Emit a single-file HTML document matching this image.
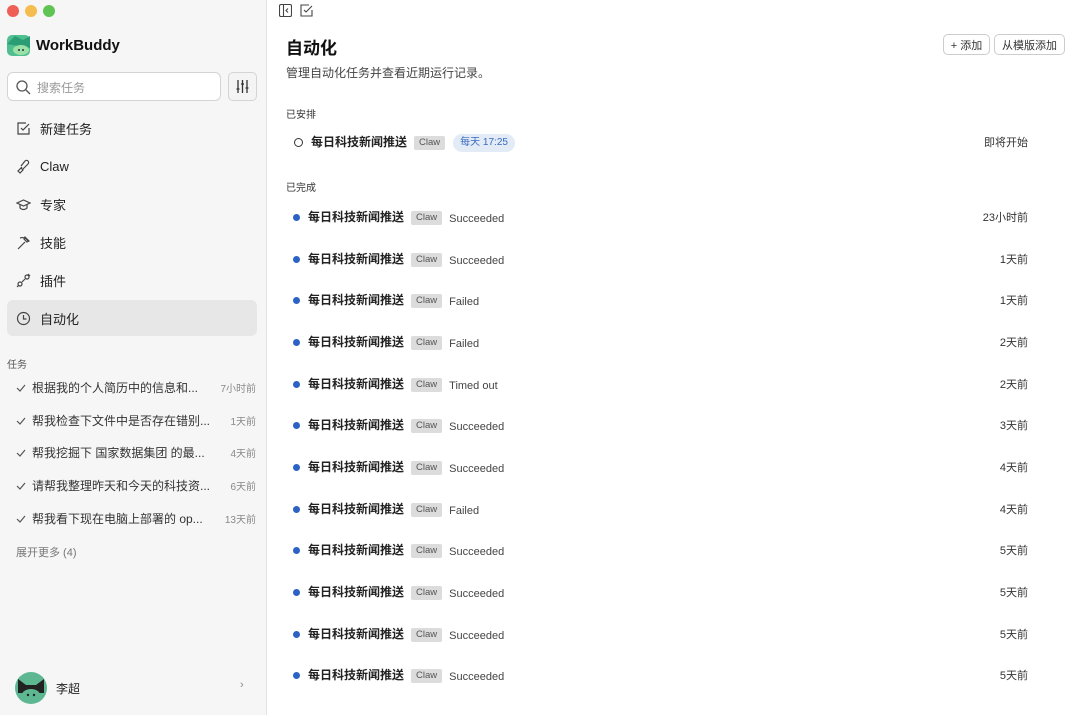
<!DOCTYPE html>
<html><head><meta charset="utf-8"><style>
*{margin:0;padding:0;box-sizing:border-box}
body{width:1080px;height:715px;overflow:hidden;background:#fff;font-family:"Liberation Sans","Noto Sans CJK SC",sans-serif;color:#222;position:relative}
.sb{position:absolute;left:0;top:0;width:267px;height:715px;background:#f6f6f6;border-right:1px solid #e4e4e4}
.abs{position:absolute}
.dot{width:12px;height:12px;border-radius:50%;position:absolute;top:5px}
.nav{position:absolute;left:7px;width:250px;height:36px;display:flex;align-items:center;padding-left:9px;font-size:13px;color:#222}
.nav svg{margin-right:9px}
.task{position:absolute;left:16px;width:240px;height:16px;font-size:12px;color:#333;display:flex;align-items:center}
.task>*{display:block;line-height:16px}
.task svg{margin-right:6px;flex:none}
.task .t{flex:1;white-space:nowrap;overflow:hidden}
.task .d{font-size:10px;color:#888;margin-left:6px;position:relative;top:2px}
.row{position:absolute;left:293px;height:18px;display:flex;align-items:center;font-size:11px}
.row>span{display:block;line-height:16px}
.bd{width:7px!important;height:7px;border-radius:50%;background:#2b62c4;margin-right:8px}
.ti{font-weight:bold;font-size:12px;color:#222}
.tag{background:#dcdcdc;color:#555;font-size:9.5px;padding:0 5px;line-height:14px!important;height:14px;border-radius:2px;margin-left:7px;position:relative;top:1px}
.st{color:#444;margin-left:7px;position:relative;top:2px}
.tm{position:absolute;right:52px;font-size:11px;color:#333;line-height:18px}
.btn{position:absolute;top:34px;height:21px;border:1px solid #ccc;border-radius:5px;font-size:11px;color:#333;display:flex;align-items:center;justify-content:center;background:#fff}
</style></head><body>
<div class="sb">
 <div class="dot" style="left:7px;background:#ee5f57"></div>
 <div class="dot" style="left:25px;background:#f5bd4f"></div>
 <div class="dot" style="left:43px;background:#5fc454"></div>
 <svg class="abs" style="left:7px;top:34px" width="23" height="23" viewBox="0 0 23 23"><rect x="0" y="1" width="23" height="21" rx="5" fill="#4fbf8f"/><path d="M0 10 L8 2 L16 6 L23 2 L23 14 Z" fill="#2a9d75"/><ellipse cx="14" cy="16" rx="8" ry="5" fill="#9be0a6"/><circle cx="12" cy="16" r="1" fill="#234"/><circle cx="16" cy="16" r="1" fill="#234"/></svg>
 <div class="abs" style="left:36px;top:37px;font-size:15px;font-weight:bold;color:#111">WorkBuddy</div>
 <div class="abs" style="left:7px;top:72px;width:214px;height:29px;border:1px solid #d4d4d4;border-radius:6px;background:#fff"></div>
 <svg class="abs" style="left:15px;top:79px" width="16" height="16" viewBox="0 0 16 16" fill="none" stroke="#555" stroke-width="1.3"><circle cx="7" cy="7" r="5"/><path d="M11 11l4 4"/></svg>
 <div class="abs" style="left:37px;top:79px;font-size:12px;color:#999">搜索任务</div>
 <div class="abs" style="left:228px;top:72px;width:29px;height:29px;border:1px solid #d4d4d4;border-radius:5px;background:#f4f4f4"></div>
 <svg class="abs" style="left:235px;top:79px" width="15" height="15" viewBox="0 0 15 15" stroke="#333" stroke-width="1.3" fill="none"><path d="M3 1v13M7.5 1v13M12 1v13M1.5 10h3M6 5h3M10.5 9h3"/></svg>
 <div class="nav" style="top:110px"><svg width="15" height="15" viewBox="0 0 15 15" fill="none" stroke="#444" stroke-width="1.2"><path d="M13 7v6H2V2h8"/><path d="M5 7l2 2 6-6"/></svg>新建任务</div>
 <div class="nav" style="top:148px"><svg width="15" height="15" viewBox="0 0 15 15" fill="none" stroke="#444" stroke-width="1.2"><path d="M2 12l4-4M4 14l-2-2 3-3 2 2zM7 10l5-5a2 2 0 0 0-3-3L5 7"/></svg>Claw</div>
 <div class="nav" style="top:186px"><svg width="15" height="15" viewBox="0 0 15 15" fill="none" stroke="#444" stroke-width="1.2"><path d="M1 6l6.5-3L14 6l-6.5 3z"/><path d="M4 7.5v3.5c2 2 5 2 7 0V7.5"/></svg>专家</div>
 <div class="nav" style="top:224px"><svg width="15" height="15" viewBox="0 0 15 15" fill="none" stroke="#444" stroke-width="1.2"><path d="M2 14l7-7M4 3c3-1 6 0 8 3M9 2l4 4-2 1-3-3z"/></svg>技能</div>
 <div class="nav" style="top:262px"><svg width="15" height="15" viewBox="0 0 15 15" fill="none" stroke="#444" stroke-width="1.2"><circle cx="4" cy="11" r="2"/><circle cx="11" cy="4" r="2"/><path d="M1 14l2-2M12 1l2 2M6 9l3-3"/></svg>插件</div>
 <div class="nav" style="top:300px;background:#e7e7e7;border-radius:6px"><svg width="15" height="15" viewBox="0 0 15 15" fill="none" stroke="#444" stroke-width="1.2"><circle cx="7.5" cy="7.5" r="6"/><path d="M7.5 4v4h3"/></svg>自动化</div>
 <div class="abs" style="left:7px;top:356px;font-size:10px;color:#555">任务</div>
 <div class="task" style="top:380px"><svg width="10" height="10" viewBox="0 0 10 10" fill="none" stroke="#555" stroke-width="1.2"><path d="M1 5l3 3 5-6"/></svg><span class="t">根据我的个人简历中的信息和...</span><span class="d">7小时前</span></div>
 <div class="task" style="top:413px"><svg width="10" height="10" viewBox="0 0 10 10" fill="none" stroke="#555" stroke-width="1.2"><path d="M1 5l3 3 5-6"/></svg><span class="t">帮我检查下文件中是否存在错别...</span><span class="d">1天前</span></div>
 <div class="task" style="top:445px"><svg width="10" height="10" viewBox="0 0 10 10" fill="none" stroke="#555" stroke-width="1.2"><path d="M1 5l3 3 5-6"/></svg><span class="t">帮我挖掘下 国家数据集团 的最...</span><span class="d">4天前</span></div>
 <div class="task" style="top:478px"><svg width="10" height="10" viewBox="0 0 10 10" fill="none" stroke="#555" stroke-width="1.2"><path d="M1 5l3 3 5-6"/></svg><span class="t">请帮我整理昨天和今天的科技资...</span><span class="d">6天前</span></div>
 <div class="task" style="top:511px"><svg width="10" height="10" viewBox="0 0 10 10" fill="none" stroke="#555" stroke-width="1.2"><path d="M1 5l3 3 5-6"/></svg><span class="t">帮我看下现在电脑上部署的 op...</span><span class="d">13天前</span></div>
 <div class="abs" style="left:16px;top:544px;font-size:11px;color:#777">展开更多 (4)</div>
 <svg class="abs" style="left:14px;top:671px" width="34" height="34" viewBox="0 0 34 34"><circle cx="17" cy="17" r="16" fill="#5db891"/><path d="M4 8l8 6h10l8-6v14H4z" fill="#222"/><ellipse cx="17" cy="24" rx="9" ry="6" fill="#5db891"/><circle cx="14" cy="24" r="1.2" fill="#222"/><circle cx="20" cy="24" r="1.2" fill="#222"/></svg>
 <div class="abs" style="left:56px;top:680px;font-size:12px;color:#222">李超</div>
 <div class="abs" style="left:240px;top:679px;font-size:11px;color:#888">›</div>
</div>
<svg class="abs" style="left:279px;top:4px" width="13" height="13" viewBox="0 0 13 13" fill="none" stroke="#444" stroke-width="1.1"><rect x="0.5" y="0.5" width="12" height="12" rx="1.5"/><path d="M4.5 1v11M9 4.5L7 6.5l2 2"/></svg>
<svg class="abs" style="left:300px;top:4px" width="14" height="13" viewBox="0 0 14 13" fill="none" stroke="#444" stroke-width="1.1"><path d="M12 6v6H1V1h8"/><path d="M4 6l2 2 6-6"/></svg>
<div class="abs" style="left:286px;top:34px;font-size:17px;font-weight:bold;color:#111">自动化</div>
<div class="abs" style="left:286px;top:64px;font-size:12px;color:#444">管理自动化任务并查看近期运行记录。</div>
<div class="btn" style="left:943px;width:47px">+ 添加</div>
<div class="btn" style="left:994px;width:71px">从模版添加</div>
<div class="abs" style="left:286px;top:106px;font-size:10px;color:#333">已安排</div>
<div class="row" style="top:133px"><span style="width:9px;height:9px;border:1.5px solid #333;border-radius:50%;margin-right:8px;margin-left:1px"></span><span class="ti">每日科技新闻推送</span><span class="tag">Claw</span><span style="margin-left:8px;background:#e3ebf7;color:#3a6cc0;font-size:10px;padding:1px 7px;border-radius:9px;position:relative;top:1px">每天 17:25</span></div>
<div class="tm" style="top:134px">即将开始</div>
<div class="abs" style="left:286px;top:179px;font-size:10px;color:#333">已完成</div>
<div class="row" style="top:208px"><span class="bd"></span><span class="ti">每日科技新闻推送</span><span class="tag">Claw</span><span class="st">Succeeded</span></div><div class="tm" style="top:209px">23小时前</div>
<div class="row" style="top:250px"><span class="bd"></span><span class="ti">每日科技新闻推送</span><span class="tag">Claw</span><span class="st">Succeeded</span></div><div class="tm" style="top:251px">1天前</div>
<div class="row" style="top:291px"><span class="bd"></span><span class="ti">每日科技新闻推送</span><span class="tag">Claw</span><span class="st">Failed</span></div><div class="tm" style="top:292px">1天前</div>
<div class="row" style="top:333px"><span class="bd"></span><span class="ti">每日科技新闻推送</span><span class="tag">Claw</span><span class="st">Failed</span></div><div class="tm" style="top:334px">2天前</div>
<div class="row" style="top:375px"><span class="bd"></span><span class="ti">每日科技新闻推送</span><span class="tag">Claw</span><span class="st">Timed out</span></div><div class="tm" style="top:376px">2天前</div>
<div class="row" style="top:416px"><span class="bd"></span><span class="ti">每日科技新闻推送</span><span class="tag">Claw</span><span class="st">Succeeded</span></div><div class="tm" style="top:417px">3天前</div>
<div class="row" style="top:458px"><span class="bd"></span><span class="ti">每日科技新闻推送</span><span class="tag">Claw</span><span class="st">Succeeded</span></div><div class="tm" style="top:459px">4天前</div>
<div class="row" style="top:500px"><span class="bd"></span><span class="ti">每日科技新闻推送</span><span class="tag">Claw</span><span class="st">Failed</span></div><div class="tm" style="top:501px">4天前</div>
<div class="row" style="top:541px"><span class="bd"></span><span class="ti">每日科技新闻推送</span><span class="tag">Claw</span><span class="st">Succeeded</span></div><div class="tm" style="top:542px">5天前</div>
<div class="row" style="top:583px"><span class="bd"></span><span class="ti">每日科技新闻推送</span><span class="tag">Claw</span><span class="st">Succeeded</span></div><div class="tm" style="top:584px">5天前</div>
<div class="row" style="top:625px"><span class="bd"></span><span class="ti">每日科技新闻推送</span><span class="tag">Claw</span><span class="st">Succeeded</span></div><div class="tm" style="top:626px">5天前</div>
<div class="row" style="top:666px"><span class="bd"></span><span class="ti">每日科技新闻推送</span><span class="tag">Claw</span><span class="st">Succeeded</span></div><div class="tm" style="top:667px">5天前</div>
</body></html>
